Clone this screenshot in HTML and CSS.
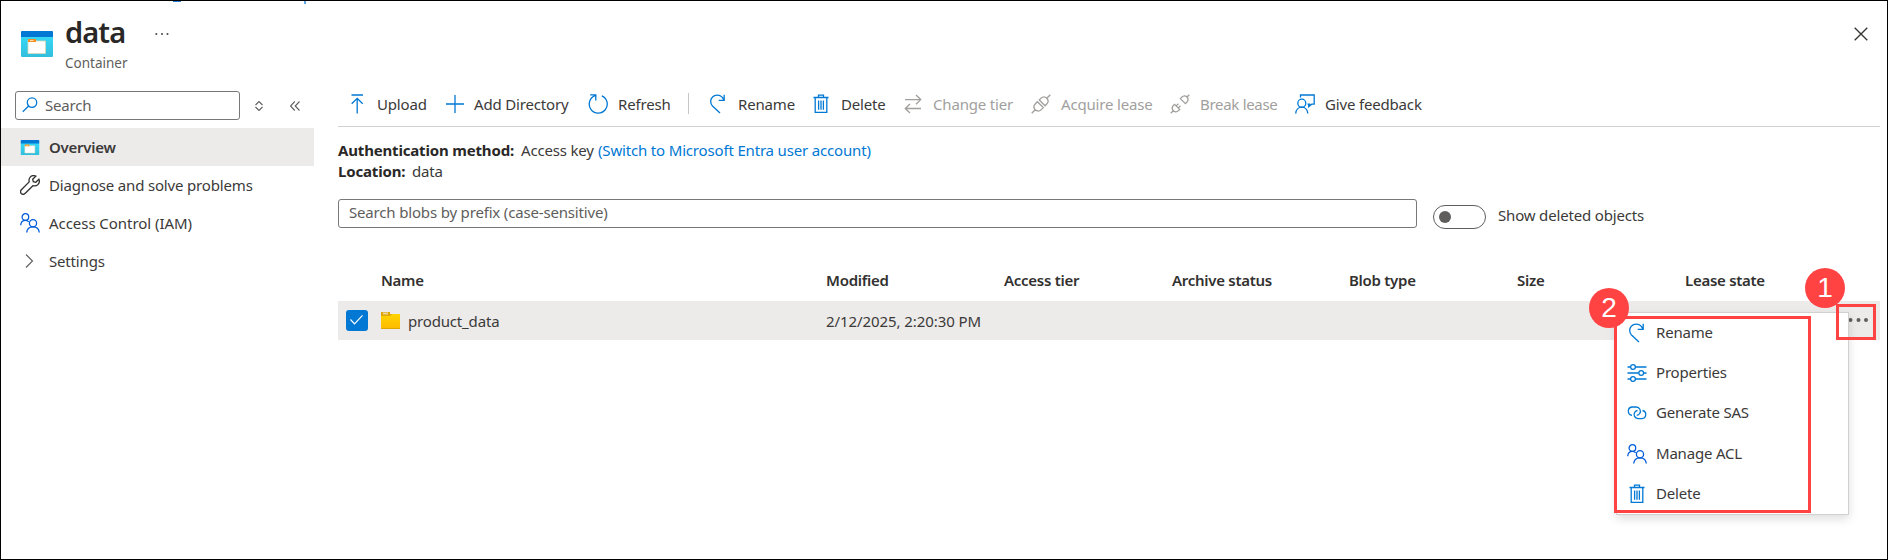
FILE: index.html
```html
<!DOCTYPE html>
<html lang="en">
<head>
<meta charset="utf-8">
<title>data - Container</title>
<link rel="stylesheet" href="styles.css">
</head>
<body>
<svg class="defs" width="0" height="0">
  <defs>
    <linearGradient id="cyan" x1="0" y1="0" x2="0" y2="1"><stop offset="0" stop-color="#37d8f7"/><stop offset="1" stop-color="#32bedd"/></linearGradient>
    <linearGradient id="gold" x1="0" y1="0" x2="0" y2="1"><stop offset="0" stop-color="#ffd400"/><stop offset="1" stop-color="#fdbb00"/></linearGradient>
    <symbol id="container" viewBox="0 0 32 26">
      <rect y="5" width="32" height="21" rx="1" fill="url(#cyan)"/>
      <path d="M1 0h30a1 1 0 0 1 1 1v5H0V1a1 1 0 0 1 1-1z" fill="#0078d4"/>
      <path d="M7 9h8v1h9.500v12.500H7z" fill="#fff" stroke="#d9d9b5" stroke-width=".8"/>
      <rect x="7" y="8" width="8" height="3" rx=".6" fill="#f78d1e"/>
      <path d="M9 9.500h3.500" stroke="#ffe0b0" stroke-width="1"/>
    </symbol>
    <symbol id="rename" viewBox="0 0 20 20"><path d="M12 19 4.500 12A6.600 6.600 0 0 1 2.700 7.500C2.700 3.900 5.500 1.200 9 1.200c3.200 0 5.500 1.800 6.700 4.600M16.200.8v5.500h-5.500"/></symbol>
    <symbol id="trash" viewBox="0 0 20 20"><path d="M2.500 3.500h15M7.500 3V1.100h5V3M4.200 4v14.400h11.600V4M7.600 6.500v9.200M10 6.500v9.200M12.400 6.500v9.200"/></symbol>
    <symbol id="people" viewBox="0 0 20 20"><circle cx="5.400" cy="4" r="3.300"/><path d="M.7 12.200c.3-3 2.200-4.800 4.700-4.800 1.400 0 2.500.4 3.300 1.300"/><circle cx="13" cy="10.200" r="3.600"/><path d="M6.700 19.500c.4-3.500 3-5.600 6.300-5.600s5.900 2.100 6.300 5.600"/></symbol>
    <symbol id="plug" viewBox="0 0 20 20"><path d="m.7 19.300 3.500-3.500M19.300.7l-3.500 3.500M4.200 15.800c-1.700-2-1.500-4.400.2-6.100l2-2 5.900 5.900-2 2c-1.700 1.700-4.100 1.900-6.100.2zM8.300 5.900l1.700-1.600c1.700-1.700 4-1.800 5.800-.1 1.700 1.800 1.600 4.100-.1 5.800l-1.600 1.700z"/></symbol>
    <symbol id="unplug" viewBox="0 0 20 20"><path d="m.7 19.300 2.600-2.600M19.300.7l-2.300 2.300M3.300 16.700c-1.500-1.700-1.400-3.700.1-5.200l1.200-1.200 5.100 5.100-1.200 1.200c-1.500 1.500-3.500 1.600-5.200.1zM10.300 4.600l1.400-1.400c1.600-1.500 3.700-1.600 5.300-.2 1.400 1.600 1.300 3.700-.2 5.300l-1.400 1.400zM6.200 11.900l2.200-2.200M8.300 13.900l2.200-2.200"/></symbol>
  </defs>
</svg>

<div class="page">
  <i class="sliver sliver-a"></i><i class="sliver sliver-b"></i>

  <aside class="side">
    <header class="heading">
      <svg class="heading-icon" width="32" height="26"><use href="#container"/></svg>
      <div>
        <div class="title-row"><h1>data</h1><svg class="dots" width="14" height="4" fill="#484644"><circle cx="1.300" cy="2" r="1"/><circle cx="7" cy="2" r="1"/><circle cx="12.500" cy="2" r="1"/></svg></div>
        <p class="subtitle">Container</p>
      </div>
    </header>
    <div class="side-tools">
      <div class="side-search">
        <svg class="ico" width="16" height="16" viewBox="0 0 16 16"><circle cx="10" cy="5.600" r="4.700"/><path d="M6.600 9 .8 14.800"/></svg>
        <span>Search</span>
      </div>
      <svg class="ico grey sorter" width="8" height="10" viewBox="0 0 8 10"><path d="m.5 4 3.500-3.500L7.500 4M.5 6 4 9.500 7.500 6"/></svg>
      <svg class="ico grey collapse" width="10" height="10" viewBox="0 0 10 10"><path d="M4.800.5.5 5l4.300 4.500M9.500.5 5.200 5l4.300 4.500"/></svg>
    </div>
    <nav class="nav">
      <a class="nav-item active"><svg width="19" height="15"><use href="#container"/></svg><span>Overview</span></a>
      <a class="nav-item"><svg class="ico dark" width="20" height="20" viewBox="0 0 20 20"><path d="M18.900 4.200 15.800 7.300 13.300 6.700 12.700 4.200 15.800 1.100C13.500.1 11.500.7 10.200 2.100 8.900 3.500 8.800 5.200 9.200 6.900L1.600 14.500C.3 15.800.3 17.400 1.300 18.500 2.400 19.500 4 19.600 5.300 18.300L12.900 10.700C14.800 11.200 16.600 10.900 17.900 9.600 19.300 8.200 19.700 6.200 18.900 4.200Z"/></svg><span>Diagnose and solve problems</span></a>
      <a class="nav-item iam"><svg class="ico azure" width="20" height="20"><use href="#people"/></svg><span>Access Control (IAM)</span></a>
      <a class="nav-item short"><svg class="ico grey" width="20" height="20" viewBox="0 0 20 20"><path d="m6 3.500 6.500 6.500L6 16.500"/></svg><span>Settings</span></a>
    </nav>
  </aside>

  <main class="main">
    <div class="close-row"><svg class="ico dark" width="14" height="14" viewBox="0 0 14 14"><path d="m.7.7 12.600 12.600M13.300.7.7 13.300"/></svg></div>

    <div class="toolbar">
      <div class="tool"><svg class="ico" width="20" height="20" viewBox="0 0 20 20"><path d="M4.500 1h11.500M10.200 19.500V4.500M4.700 9.800l5.500-5.500 5.500 5.500"/></svg><span>Upload</span></div>
      <div class="tool"><svg class="ico" width="20" height="20" viewBox="0 0 20 20"><path d="M11 1v18M2 10h18"/></svg><span>Add Directory</span></div>
      <div class="tool"><svg class="ico" width="20" height="20" viewBox="0 0 20 20"><path d="M13.800 1.800a9 9 0 1 1-6.600-.2M2.200.9h5.600v5.600"/></svg><span>Refresh</span></div>
      <div class="divider"></div>
      <div class="tool"><svg class="ico" width="20" height="20"><use href="#rename"/></svg><span>Rename</span></div>
      <div class="tool"><svg class="ico" width="20" height="20"><use href="#trash"/></svg><span>Delete</span></div>
      <div class="tool off"><svg class="ico" width="20" height="20" viewBox="0 0 20 20"><path d="M2 5.600h15.500M13 1l4.700 4.600L13 10.200M18 14.500H2.300M7 10l-4.700 4.500L7 19"/></svg><span>Change tier</span></div>
      <div class="tool off"><svg class="ico" width="20" height="20"><use href="#plug"/></svg><span>Acquire lease</span></div>
      <div class="tool off tight"><svg class="ico" width="20" height="20"><use href="#unplug"/></svg><span>Break lease</span></div>
      <div class="tool"><svg class="ico" width="20" height="20" viewBox="0 0 20 20"><path d="M5.500 3.500V1h13.700v9.200h-2.500l-3 2.400V9.500M12.500 10.200h2.700"/><circle cx="6.800" cy="9.200" r="4"/><path d="M.7 19.500c.3-3.700 2.800-6.300 6.100-6.300s5.700 2.600 6 6.300"/></svg><span>Give feedback</span></div>
    </div>

    <div class="facts">
      <div><b class="auth-label">Authentication method:</b><span class="key">Access key</span><a class="link">(Switch to Microsoft Entra user account)</a></div>
      <div><b class="loc-label">Location:</b><span>data</span></div>
    </div>

    <div class="filter">
      <div class="blob-search">Search blobs by prefix (case-sensitive)</div>
      <div class="toggle"><i></i></div>
      <span class="toggle-label">Show deleted objects</span>
    </div>

    <div class="table">
      <div class="row head"><span></span><span>Name</span><span>Modified</span><span>Access tier</span><span>Archive status</span><span>Blob type</span><span>Size</span><span>Lease state</span></div>
      <div class="row body">
        <div class="check"><svg width="22" height="21" viewBox="0 0 22 21"><path d="m4.500 9.500 4 4.300 8-8.500" fill="none" stroke="#fff" stroke-width="1.200"/></svg></div>
        <div class="name"><svg width="19" height="17" viewBox="0 0 19 17"><path d="M0 0h9v2h10v15H0z" fill="#dfa500"/><path d="M0 4h9l2-2h8v14H0z" fill="url(#gold)"/><rect x="2" y=".5" width="5" height="2" fill="#e9d5a0"/></svg><span>product_data</span></div>
        <span class="date">2/12/2025, 2:20:30 PM</span><span></span><span></span><span></span><span></span><span></span>
        <svg class="more" width="20" height="6" fill="#605e5c"><circle cx="2.500" cy="3" r="2"/><circle cx="10.500" cy="3" r="2"/><circle cx="18" cy="3" r="2"/></svg>
      </div>
    </div>
  </main>

  <div class="menu">
    <div class="menu-item"><svg class="ico" width="20" height="20"><use href="#rename"/></svg><span>Rename</span></div>
    <div class="menu-item"><svg class="ico" width="20" height="20" viewBox="0 0 20 20"><path d="M.5 4h3M8.500 4h11M.5 10h11M16.500 10h3M.5 16h3M8.500 16h11"/><circle cx="6" cy="4" r="2.400"/><circle cx="14.200" cy="10" r="2.400"/><circle cx="6" cy="16" r="2.400"/></svg><span>Properties</span></div>
    <div class="menu-item"><svg class="ico" width="20" height="20" viewBox="0 0 20 20"><path d="M5 12.300a4.200 4.200 0 0 1-.2-8.300h4.400a4.200 4.200 0 0 1 3.500 6.500c-.7 1.100-1.700 1.700-3 1.800M15.500 7.500a4.100 4.100 0 0 1-.5 8.100h-4a4.100 4.100 0 0 1-3.300-6.300c.7-1.200 1.700-1.700 2.800-1.800"/></svg><span>Generate SAS</span></div>
    <div class="menu-item"><svg class="ico azure" width="20" height="20"><use href="#people"/></svg><span>Manage ACL</span></div>
    <div class="menu-item"><svg class="ico" width="20" height="20"><use href="#trash"/></svg><span>Delete</span></div>
  </div>
  <div class="mark mark-menu"></div>
  <div class="mark mark-more"></div>
  <div class="badge badge-one">1</div>
  <div class="badge badge-two">2</div>
</div>
</body>
</html>
```
FILE: styles.css
```css
* { box-sizing: border-box; }
html, body { height: 560px; overflow: hidden; }
body {
  margin: 0;
  background: #fff;
  color: #3b3a39;
  font: 15px/20px "Noto Sans", "Open Sans", sans-serif;
  letter-spacing: -0.17px;
}
h1, p { margin: 0; }
.defs { position: absolute; top: 0; left: 0; }
.page {
  position: relative;
  display: flex;
  width: 1888px;
  height: 560px;
  border: 1px solid #000;
  overflow: hidden;
  white-space: nowrap;
}
.sliver { position: absolute; background: #2b7cd3; }
.sliver-a { left: 172px; top: -1px; width: 8px; height: 2px; }
.sliver-b { left: 303px; top: 0; width: 2px; height: 3px; background: #5ea4e6; }

.ico { flex: none; fill: none; stroke: #0078d4; stroke-width: 1.3; }
.grey { stroke: #605e5c; stroke-width: 1.1; }
.dark { stroke: #323130; }
.azure { stroke: #015cda; }

.side { width: 313px; flex: none; }
.heading { display: flex; gap: 12px; height: 90px; padding: 11px 0 0 20px; }
.heading-icon { margin-top: 19px; }
.title-row { display: flex; align-items: center; gap: 30px; height: 40px; }
.dots { margin-top: 4px; }
h1 { font-size: 29px; line-height: 40px; font-weight: 600; letter-spacing: -0.9px; color: #292827; }
.subtitle { margin-top: 1px; font-size: 13.500px; color: #605e5c; letter-spacing: 0; }
.side-tools { display: flex; align-items: center; height: 29px; padding-left: 14px; }
.side-search {
  display: flex; align-items: center; gap: 7px;
  width: 225px; height: 29px; padding: 0 6px 2px;
  border: 1px solid #7a7876; border-radius: 3px;
  color: #605e5c;
}
.sorter { margin-left: 15px; }
.collapse { margin-left: 27px; }
.nav { margin-top: 8px; }
.nav-item { display: flex; align-items: center; gap: 9px; height: 38px; padding-left: 19px; }
.nav-item svg { width: 20px; }
.iam { letter-spacing: -0.05px; }
.short { height: 37px; }
.active { background: #edebe9; font-weight: 600; letter-spacing: -0.25px; }

.main { flex: 1; padding: 0 7px 0 24px; }
.close-row { display: flex; justify-content: flex-end; height: 81px; padding: 26px 12px 0 0; }
.toolbar {
  display: grid;
  grid-template-columns: 97px 144px 112px 8px 103px 92px 128px 139px 125px 1fr;
  align-items: center;
  height: 45px;
  padding: 0 0 1px 9px;
  border-bottom: 1px solid #d2d0ce;
}
.tool { display: flex; align-items: center; gap: 10px; }
.tight { letter-spacing: -0.3px; }
.divider { width: 1px; height: 21px; margin-left: -12px; background: #c8c6c4; }
.off { color: #a19f9d; }
.off .ico { stroke: #a19f9d; }
.facts { padding-top: 13px; line-height: 21px; }
.facts b { display: inline-block; color: #292827; }
.auth-label { width: 183px; }
.loc-label { width: 74px; }
.key { display: inline-block; width: 77px; }
.link { color: #0078d4; }
.filter { display: flex; margin-top: 17px; height: 30px; }
.blob-search {
  width: 1079px; height: 29px; padding: 2px 10px;
  border: 1px solid #7a7876; border-radius: 3px; color: #605e5c;
}
.toggle {
  display: flex; align-items: center;
  width: 53px; height: 24px; margin: 6px 12px 0 16px; padding-left: 5px;
  border: 1px solid #605e5c; border-radius: 12px;
}
.toggle i { width: 12px; height: 12px; border-radius: 50%; background: #605e5c; }
.toggle-label { margin-top: 6px; }
.row {
  position: relative;
  display: grid;
  grid-template-columns: 35px 445px 178px 168px 177px 168px 168px 1fr;
  align-items: center;
  padding-left: 8px;
}
.head { height: 40px; margin-top: 32px; padding-bottom: 3px; font-weight: 600; color: #323130; letter-spacing: -0.28px; }
.body { height: 39px; background: #edebe9; }
.check { width: 22px; height: 21px; border-radius: 3px; background: #0078d4; }
.name { display: flex; align-items: center; gap: 8px; }
.date { letter-spacing: -0.08px; }
.more { position: absolute; right: 12px; top: 16px; }

.menu {
  position: absolute; left: 1615px; top: 311px;
  width: 233px; height: 203px;
  background: #fff; border: 1px solid #d2d0ce;
  box-shadow: 0 4px 9px rgba(0,0,0,.13);
}
.menu-item { display: flex; align-items: center; gap: 9px; height: 40.200px; padding-left: 10px; letter-spacing: -0.2px; }
.menu-item span { margin-top: -2px; }
.mark { position: absolute; border: 3px solid #ff4343; }
.mark-menu { left: 1613px; top: 315px; width: 197px; height: 197px; }
.mark-more { left: 1835px; top: 303px; width: 40px; height: 36px; }
.badge {
  position: absolute; width: 40px; height: 40px; border-radius: 50%;
  background: #ff4343; color: #fff; text-align: center;
  font: 28px/40px "Liberation Sans", Arial, sans-serif;
}
.badge-one { left: 1804px; top: 267px; }
.badge-two { left: 1588px; top: 287px; }
```
